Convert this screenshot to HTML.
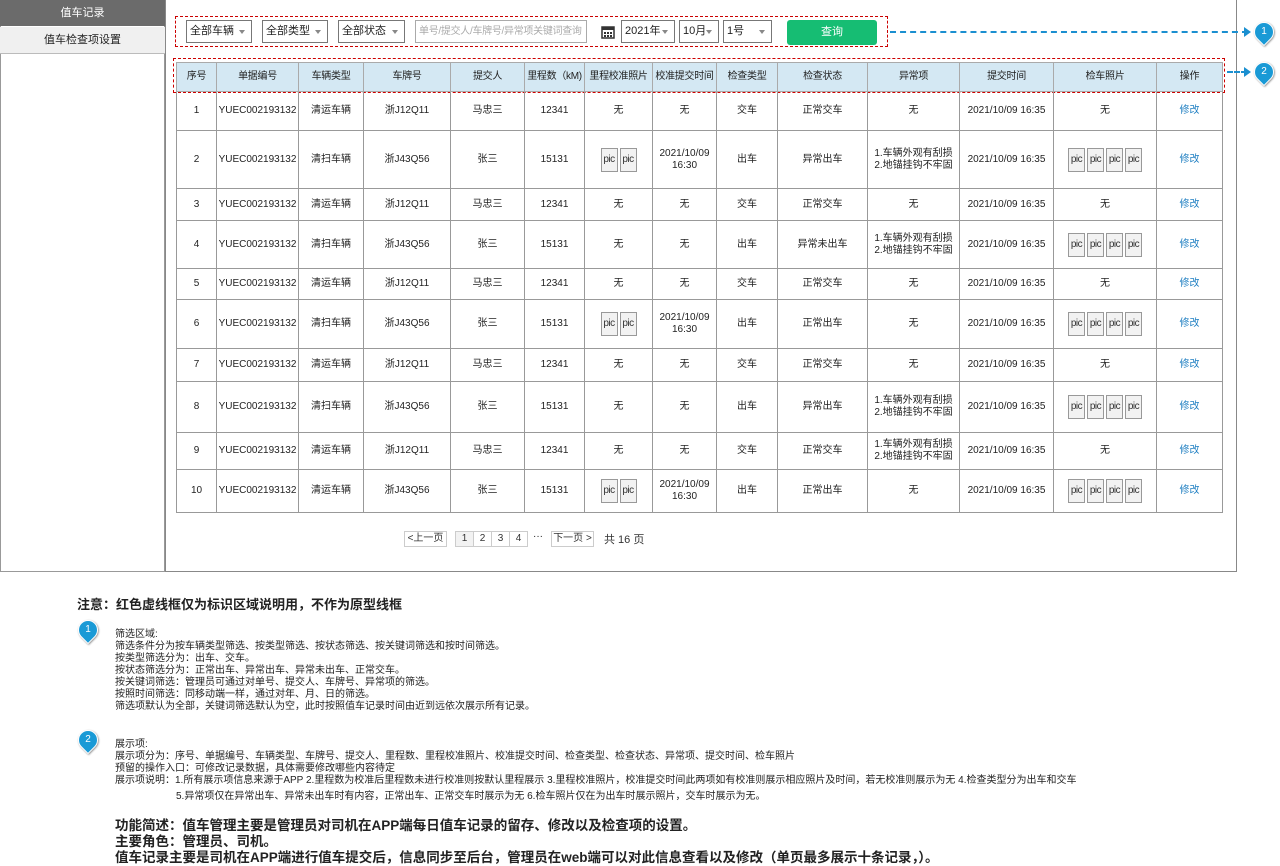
<!DOCTYPE html>
<html><head><meta charset="utf-8">
<style>
*{margin:0;padding:0;box-sizing:border-box}
body{width:1280px;height:864px;background:#fff;font-family:"Liberation Sans","Noto Sans CJK SC",sans-serif;font-size:11px;color:#222;position:relative;overflow:hidden}
.abs{position:absolute}
.sel{position:absolute;top:20px;height:23px;border:1px solid #777;background:#fff;font-size:11px;line-height:21px;padding-left:3px;white-space:nowrap;overflow:hidden}
.sel.dd:after{content:"";position:absolute;right:6px;top:9px;border-left:3px solid transparent;border-right:3px solid transparent;border-top:4px solid #888}
table{position:absolute;left:176px;top:62px;border-collapse:collapse;table-layout:fixed;width:1046px}
td,th{border:1px solid #999;text-align:center;font-size:10px;font-weight:normal;line-height:12px;padding:0;white-space:nowrap;overflow:hidden}
th{background:#d4e8f3;border-color:#aaa;letter-spacing:-0.3px}
a{color:#1f7fc2;text-decoration:none}
.pic{display:inline-block;width:17px;height:24px;border:1px solid #999;background:#f2f2f2;font-size:10px;line-height:22px;margin:0 1px;vertical-align:middle;color:#333;position:relative;letter-spacing:-0.5px}
.mk{position:absolute;width:20px;height:20px;border-radius:50% 50% 50% 0;transform:rotate(-45deg);background:#1a9ad6;border:1px solid #fff;box-shadow:0 1px 2px #888}
.mk span{display:block;transform:rotate(45deg);color:#fff;font-size:10px;text-align:center;line-height:18px}
.pg{position:absolute;top:531px;height:16px;border:1px solid #ccc;font-size:10px;line-height:14px;text-align:center;color:#333}
.note{position:absolute;left:115px;font-size:10px;line-height:12px;color:#222;white-space:nowrap}
.big{position:absolute;left:115px;font-size:13.5px;font-weight:bold;line-height:16px;white-space:nowrap}
</style></head><body>
<div class="abs" style="left:0;top:0;width:165px;height:572px;border:1px solid #999;border-top:none;background:#fff"></div>
<div class="abs" style="left:0;top:0;width:165px;height:26px;background:#6b6b6b;color:#fff;text-align:center;line-height:26px;font-size:11px">值车记录</div>
<div class="abs" style="left:0;top:27px;width:165px;height:27px;background:#f0f0f0;border-bottom:1px solid #bbb;text-align:center;line-height:27px;font-size:11px">值车检查项设置</div>
<div class="abs" style="left:165px;top:0;width:1072px;height:572px;border:1px solid #888;border-top:none"></div>

<div class="abs" style="left:175px;top:16px;width:713px;height:31px;border:1px dashed #c00"></div>
<div class="sel dd" style="left:186px;width:66px">全部车辆</div>
<div class="sel dd" style="left:262px;width:66px">全部类型</div>
<div class="sel dd" style="left:338px;width:67px">全部状态</div>
<div class="sel" style="left:415px;width:172px;color:#aaa;border-color:#aaa;font-size:10px;letter-spacing:-0.3px">单号/提交人/车牌号/异常项关键词查询</div>
<svg class="abs" style="left:601px;top:25px" width="14" height="14"><rect x="1" y="2" width="12" height="11" fill="none" stroke="#333" stroke-width="1.5"/><rect x="1" y="2" width="12" height="3" fill="#333"/><g fill="#333"><rect x="3" y="7" width="2" height="2"/><rect x="6" y="7" width="2" height="2"/><rect x="9" y="7" width="2" height="2"/><rect x="3" y="10" width="2" height="2"/><rect x="6" y="10" width="2" height="2"/><rect x="9" y="10" width="2" height="2"/></g></svg>
<div class="sel dd" style="left:621px;width:54px">2021年</div>
<div class="sel dd" style="left:679px;width:40px">10月</div>
<div class="sel dd" style="left:723px;width:49px">1号</div>
<div class="abs" style="left:787px;top:20px;width:90px;height:25px;background:#16bd73;border-radius:3px;color:#fff;text-align:center;line-height:25px;font-size:11px">查询</div>
<div class="abs" style="left:890px;top:31px;width:358px;border-top:2px dashed #1a8fd0"></div>
<div class="abs" style="left:1244px;top:27px;border-left:7px solid #1a8fd0;border-top:5px solid transparent;border-bottom:5px solid transparent"></div>
<div class="mk" style="left:1254px;top:22px"><span>1</span></div>

<div class="abs" style="left:173px;top:58px;width:1052px;height:35px;border:1px dashed #c00"></div>
<div class="abs" style="left:1227px;top:71px;width:20px;border-top:2px dashed #1a8fd0"></div>
<div class="abs" style="left:1244px;top:67px;border-left:7px solid #1a8fd0;border-top:5px solid transparent;border-bottom:5px solid transparent"></div>
<div class="mk" style="left:1254px;top:62px"><span>2</span></div>

<table>
<colgroup><col style="width:40px"><col style="width:82px"><col style="width:65px"><col style="width:87px"><col style="width:74px"><col style="width:60px"><col style="width:68px"><col style="width:64px"><col style="width:61px"><col style="width:90px"><col style="width:92px"><col style="width:94px"><col style="width:103px"><col style="width:66px"></colgroup>
<tr style="height:29px"><th>序号</th><th>单据编号</th><th>车辆类型</th><th>车牌号</th><th>提交人</th><th>里程数（kM)</th><th>里程校准照片</th><th>校准提交时间</th><th>检查类型</th><th>检查状态</th><th>异常项</th><th>提交时间</th><th>检车照片</th><th>操作</th></tr>
<tr style="height:39px"><td>1</td><td>YUEC002193132</td><td>清运车辆</td><td>浙J12Q11</td><td>马忠三</td><td>12341</td><td>无</td><td>无</td><td>交车</td><td>正常交车</td><td>无</td><td>2021/10/09 16:35</td><td>无</td><td><a>修改</a></td></tr>
<tr style="height:58px"><td>2</td><td>YUEC002193132</td><td>清扫车辆</td><td>浙J43Q56</td><td>张三</td><td>15131</td><td><span class="pic">pic</span><span class="pic">pic</span></td><td>2021/10/09<br>16:30</td><td>出车</td><td>异常出车</td><td>1.车辆外观有刮损<br>2.地锚挂钩不牢固</td><td>2021/10/09 16:35</td><td><span class="pic">pic</span><span class="pic">pic</span><span class="pic">pic</span><span class="pic">pic</span></td><td><a>修改</a></td></tr>
<tr style="height:32px"><td>3</td><td>YUEC002193132</td><td>清运车辆</td><td>浙J12Q11</td><td>马忠三</td><td>12341</td><td>无</td><td>无</td><td>交车</td><td>正常交车</td><td>无</td><td>2021/10/09 16:35</td><td>无</td><td><a>修改</a></td></tr>
<tr style="height:48px"><td>4</td><td>YUEC002193132</td><td>清扫车辆</td><td>浙J43Q56</td><td>张三</td><td>15131</td><td>无</td><td>无</td><td>出车</td><td>异常未出车</td><td>1.车辆外观有刮损<br>2.地锚挂钩不牢固</td><td>2021/10/09 16:35</td><td><span class="pic">pic</span><span class="pic">pic</span><span class="pic">pic</span><span class="pic">pic</span></td><td><a>修改</a></td></tr>
<tr style="height:31px"><td>5</td><td>YUEC002193132</td><td>清运车辆</td><td>浙J12Q11</td><td>马忠三</td><td>12341</td><td>无</td><td>无</td><td>交车</td><td>正常交车</td><td>无</td><td>2021/10/09 16:35</td><td>无</td><td><a>修改</a></td></tr>
<tr style="height:49px"><td>6</td><td>YUEC002193132</td><td>清扫车辆</td><td>浙J43Q56</td><td>张三</td><td>15131</td><td><span class="pic">pic</span><span class="pic">pic</span></td><td>2021/10/09<br>16:30</td><td>出车</td><td>正常出车</td><td>无</td><td>2021/10/09 16:35</td><td><span class="pic">pic</span><span class="pic">pic</span><span class="pic">pic</span><span class="pic">pic</span></td><td><a>修改</a></td></tr>
<tr style="height:33px"><td>7</td><td>YUEC002193132</td><td>清运车辆</td><td>浙J12Q11</td><td>马忠三</td><td>12341</td><td>无</td><td>无</td><td>交车</td><td>正常交车</td><td>无</td><td>2021/10/09 16:35</td><td>无</td><td><a>修改</a></td></tr>
<tr style="height:51px"><td>8</td><td>YUEC002193132</td><td>清扫车辆</td><td>浙J43Q56</td><td>张三</td><td>15131</td><td>无</td><td>无</td><td>出车</td><td>异常出车</td><td>1.车辆外观有刮损<br>2.地锚挂钩不牢固</td><td>2021/10/09 16:35</td><td><span class="pic">pic</span><span class="pic">pic</span><span class="pic">pic</span><span class="pic">pic</span></td><td><a>修改</a></td></tr>
<tr style="height:37px"><td>9</td><td>YUEC002193132</td><td>清运车辆</td><td>浙J12Q11</td><td>马忠三</td><td>12341</td><td>无</td><td>无</td><td>交车</td><td>正常交车</td><td>1.车辆外观有刮损<br>2.地锚挂钩不牢固</td><td>2021/10/09 16:35</td><td>无</td><td><a>修改</a></td></tr>
<tr style="height:43px"><td>10</td><td>YUEC002193132</td><td>清运车辆</td><td>浙J43Q56</td><td>张三</td><td>15131</td><td><span class="pic">pic</span><span class="pic">pic</span></td><td>2021/10/09<br>16:30</td><td>出车</td><td>正常出车</td><td>无</td><td>2021/10/09 16:35</td><td><span class="pic">pic</span><span class="pic">pic</span><span class="pic">pic</span><span class="pic">pic</span></td><td><a>修改</a></td></tr>
</table>

<div class="pg" style="left:404px;width:43px">&lt;上一页</div>
<div class="pg" style="left:455px;width:19px;background:#f2f2f2">1</div>
<div class="pg" style="left:473px;width:19px">2</div>
<div class="pg" style="left:491px;width:19px">3</div>
<div class="pg" style="left:509px;width:19px">4</div>
<div class="abs" style="left:533px;top:531px;font-size:10px">···</div>
<div class="pg" style="left:551px;width:43px">下一页 &gt;</div>
<div class="abs" style="left:604px;top:531px;font-size:11px;color:#333">共 16 页</div>

<div class="abs" style="left:77px;top:594px;font-size:13px;font-weight:bold">注意：红色虚线框仅为标识区域说明用，不作为原型线框</div>
<div class="mk" style="left:78px;top:620px"><span>1</span></div>
<div class="note" style="top:629px">筛选区域:<br>筛选条件分为按车辆类型筛选、按类型筛选、按状态筛选、按关键词筛选和按时间筛选。<br>按类型筛选分为：出车、交车。<br>按状态筛选分为：正常出车、异常出车、异常未出车、正常交车。<br>按关键词筛选：管理员可通过对单号、提交人、车牌号、异常项的筛选。<br>按照时间筛选：同移动端一样，通过对年、月、日的筛选。<br>筛选项默认为全部，关键词筛选默认为空，此时按照值车记录时间由近到远依次展示所有记录。</div>
<div class="mk" style="left:78px;top:730px"><span>2</span></div>
<div class="note" style="top:739px">展示项:<br>展示项分为：序号、单据编号、车辆类型、车牌号、提交人、里程数、里程校准照片、校准提交时间、检查类型、检查状态、异常项、提交时间、检车照片<br>预留的操作入口：可修改记录数据，具体需要修改哪些内容待定</div>
<div class="note" style="top:775px">展示项说明：1.所有展示项信息来源于APP 2.里程数为校准后里程数未进行校准则按默认里程展示 3.里程校准照片，校准提交时间此两项如有校准则展示相应照片及时间，若无校准则展示为无 4.检查类型分为出车和交车</div>
<div class="note" style="top:791px;left:176px">5.异常项仅在异常出车、异常未出车时有内容，正常出车、正常交车时展示为无 6.检车照片仅在为出车时展示照片，交车时展示为无。</div>
<div class="big" style="top:818px">功能简述：值车管理主要是管理员对司机在APP端每日值车记录的留存、修改以及检查项的设置。</div>
<div class="big" style="top:834px">主要角色：管理员、司机。</div>
<div class="big" style="top:850px">值车记录主要是司机在APP端进行值车提交后，信息同步至后台，管理员在web端可以对此信息查看以及修改（单页最多展示十条记录，）。</div>
</body></html>
